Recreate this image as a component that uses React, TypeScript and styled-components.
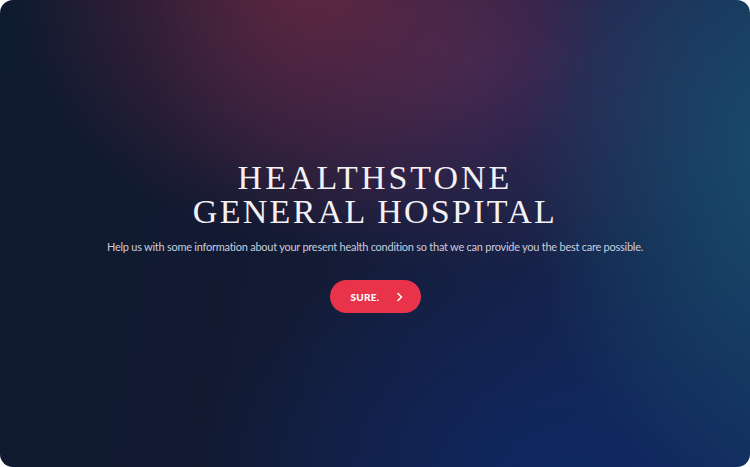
import styled, { createGlobalStyle } from "styled-components";

const GlobalStyle = createGlobalStyle`
  html, body {
    margin: 0;
    padding: 0;
    background: #ffffff;
  }
`;

const Frame = styled.div`
  width: 750px;
  height: 467px;
  border-radius: 13px;
  overflow: hidden;
  box-sizing: border-box;
  display: flex;
  flex-direction: column;
  align-items: center;
  padding-top: 161px;
  background:
    radial-gradient(ellipse 300px 260px at 310px -20px, rgba(110, 40, 65, 0.8), rgba(110, 40, 65, 0) 100%),
    radial-gradient(ellipse 260px 360px at 780px 150px, rgba(24, 78, 110, 0.9), rgba(24, 78, 110, 0) 100%),
    radial-gradient(ellipse 360px 260px at 560px 480px, rgba(14, 40, 100, 0.9), rgba(14, 40, 100, 0) 100%),
    radial-gradient(ellipse 320px 220px at 470px 60px, rgba(70, 45, 95, 0.7), rgba(70, 45, 95, 0) 100%),
    linear-gradient(100deg, #0e1a2f 0%, #131a33 40%, #172044 70%, #15305a 100%);
`;

const Title = styled.h1`
  margin: 0;
  font-family: "Liberation Serif", "DejaVu Serif", serif;
  font-weight: 400;
  font-size: 34px;
  line-height: 34px;
  color: #f4f1f4;
  text-align: center;
  text-transform: uppercase;
`;

const TitleLine = styled.span<{ $spacing?: number }>`
  display: block;
  letter-spacing: ${(p) => p.$spacing ?? 2.3}px;
`;

const Lead = styled.p`
  margin: 11px 0 0;
  font-family: "Lato", "Open Sans", sans-serif;
  font-size: 11px;
  letter-spacing: -0.25px;
  color: #c9cddd;
  text-align: center;
`;

const Button = styled.button`
  margin-top: 27px;
  width: 91px;
  height: 33px;
  border: none;
  border-radius: 17px;
  background: #e8334a;
  color: #ffffff;
  display: flex;
  align-items: center;
  justify-content: center;
  gap: 15px;
  padding: 0 0 0 4px;
  font-family: "Lato", "Open Sans", sans-serif;
  font-weight: 900;
  font-size: 10px;
  letter-spacing: 0.3px;
  cursor: pointer;
`;

const Chevron = () => (
  <svg width="9" height="10" viewBox="0 0 9 10" fill="none">
    <path d="M3 1.5 L6.5 5 L3 8.5" stroke="#fff" strokeWidth="1.6" strokeLinecap="round" strokeLinejoin="round" />
  </svg>
);

function App() {
  return (
    <>
      <GlobalStyle />
      <Frame>
        <Title>
          <TitleLine $spacing={3}>Healthstone</TitleLine>
          <TitleLine>General Hospital</TitleLine>
        </Title>
        <Lead>
          Help us with some information about your present health condition so that we can provide you the best care possible.
        </Lead>
        <Button>
          SURE.
          <Chevron />
        </Button>
      </Frame>
    </>
  );
}

export default App;
